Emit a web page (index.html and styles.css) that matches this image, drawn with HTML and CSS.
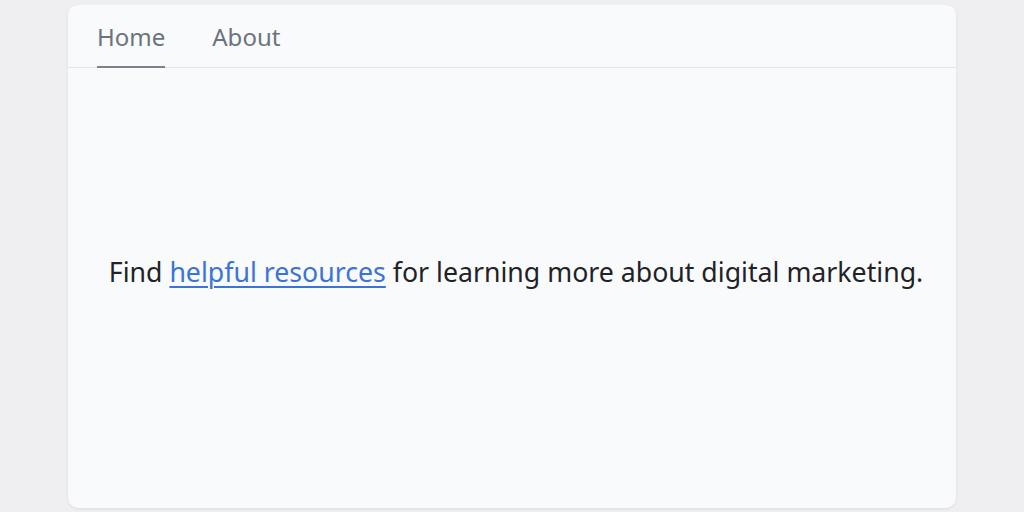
FILE: index.html
```html
<!DOCTYPE html>
<html>
<head>
<meta charset="utf-8">
<link rel="stylesheet" href="styles.css">
</head>
<body>
<div class="card">
  <nav class="tabs">
    <a class="tab active">Home</a>
    <a class="tab">About</a>
  </nav>
  <main class="content">
    <p class="lead">Find <a class="link">helpful resources</a> for learning more about digital marketing.</p>
  </main>
</div>
</body>
</html>
```
FILE: styles.css
```css
html, body { margin: 0; padding: 0; }
body {
  background: #efeff1;
  font-family: "Noto Sans", "DejaVu Sans", sans-serif;
  display: flex;
  justify-content: center;
  padding-top: 5px;
  height: 512px;
  box-sizing: border-box;
}
.card {
  width: 888px;
  height: 503px;
  background: #f9fafb;
  border-radius: 10px;
  box-shadow: 0 1px 3px rgba(0,0,0,0.08);
  display: flex;
  flex-direction: column;
  overflow: hidden;
}
.tabs {
  display: flex;
  gap: 47px;
  padding: 0 29px;
  border-bottom: 1px solid #e3e4e7;
  height: 63px;
  box-sizing: border-box;
}
.tab {
  color: #6b7280;
  font-size: 24px;
  line-height: 1;
  padding-top: 20px;
  box-sizing: border-box;
  height: 63px;
  border-bottom: 2px solid transparent;
}
.tab.active { border-bottom-color: #7c818a; }
.content {
  flex: 1;
  display: flex;
  align-items: center;
  justify-content: center;
  padding-bottom: 34px;
  padding-left: 8px;
}
.lead {
  margin: 0;
  font-size: 26.7px;
  color: #1f2328;
}
.link {
  color: #3b73d9;
  text-decoration: underline;
  text-underline-offset: 4px;
  text-decoration-thickness: 2px;
}
```
